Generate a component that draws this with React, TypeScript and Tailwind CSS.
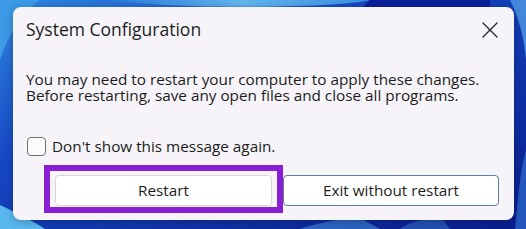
import React from "react";

const Wallpaper = () => (
  <svg className="absolute inset-0 h-full w-full" viewBox="0 0 526 229" preserveAspectRatio="none">
    <defs>
      <linearGradient id="bg" x1="0" y1="0" x2="1" y2="1">
        <stop offset="0" stopColor="#2f86e0" />
        <stop offset="0.35" stopColor="#1648c4" />
        <stop offset="1" stopColor="#0a1d8c" />
      </linearGradient>
      <linearGradient id="streak" x1="0" y1="0" x2="1" y2="0">
        <stop offset="0" stopColor="#2b78d8" />
        <stop offset="0.5" stopColor="#62b5ef" />
        <stop offset="1" stopColor="#3a8fe0" />
      </linearGradient>
    </defs>
    <rect width="526" height="229" fill="url(#bg)" />
    <path d="M110 0 L370 0 C340 8 180 10 110 0 Z" fill="url(#streak)" />
    <path d="M370 0 L490 0 L490 10 L360 10 Z" fill="#0b1f9a" />
    <path d="M0 0 L40 0 C25 10 10 30 0 60 Z" fill="#3c9ae6" />
    <path d="M492 0 L510 0 C520 20 524 40 526 60 L526 0 Z" fill="#5aa8ea" opacity="0.7" />
    <path d="M0 205 C20 215 35 222 45 229 L0 229 Z" fill="#59b8ee" />
    <path d="M300 229 C320 222 340 219 360 218 L380 229 Z" fill="#3b7fd6" opacity="0.7" />
    <path d="M400 229 C410 222 425 218 440 216 L450 229 Z" fill="#3b7fd6" opacity="0.5" />
    <path d="M515 229 C518 200 520 170 526 150 L526 229 Z" fill="#2f6fd0" opacity="0.7" />
  </svg>
);

const CloseIcon = () => (
  <svg width="16" height="16" viewBox="0 0 16 16" fill="none">
    <path d="M1 1 L15 15 M15 1 L1 15" stroke="#2b2b2b" strokeWidth="1.4" strokeLinecap="round" />
  </svg>
);

export default function App() {
  return (
    <div
      className="relative h-[229px] w-[526px] overflow-hidden"
      style={{ fontFamily: '"Open Sans", "Noto Sans", sans-serif' }}
    >
      <Wallpaper />
      <div className="relative ml-[13px] mt-[7px] h-[213px] w-[501px] rounded-[8px] bg-[#f6f4f8] text-[#1c1c1c] shadow-[0_2px_8px_rgba(0,0,0,0.25)]">
        {/* header */}
        <div className="flex h-[46px] items-center justify-between pl-[13px] pr-[16px]">
          <span className="text-[17.5px] leading-none">System Configuration</span>
          <CloseIcon />
        </div>

        {/* message */}
        <div className="mt-[18px] pl-[13px] text-[15.3px] leading-[16px]">
          <p>You may need to restart your computer to apply these changes.</p>
          <p>Before restarting, save any open files and close all programs.</p>
        </div>

        {/* checkbox */}
        <label className="mt-[34px] flex h-[19px] items-center pl-[14px] text-[15.3px] leading-[19px]">
          <span className="h-[19px] w-[19px] shrink-0 rounded-[4px] border border-[#6f6f6f] bg-[#fbfbfb]" />
          <span className="ml-[6px]">Don't show this message again.</span>
        </label>

        {/* buttons */}
        <div className="mt-[9px] flex items-start pl-[31px]">
          <div className="border-[6px] border-[#8a1ed2] px-[5px] pb-[1px] pt-[4px]">
            <button className="h-[31px] w-[217px] rounded-[4px] border border-[#d6d6d6] bg-white text-[15.3px] text-[#1c1c1c]">
              Restart
            </button>
          </div>
          <button className="mt-[10px] h-[31px] w-[216px] rounded-[4px] border border-[#5e7fa5] bg-white text-[15.3px] text-[#1c1c1c]">
            Exit without restart
          </button>
        </div>
      </div>
    </div>
  );
}
